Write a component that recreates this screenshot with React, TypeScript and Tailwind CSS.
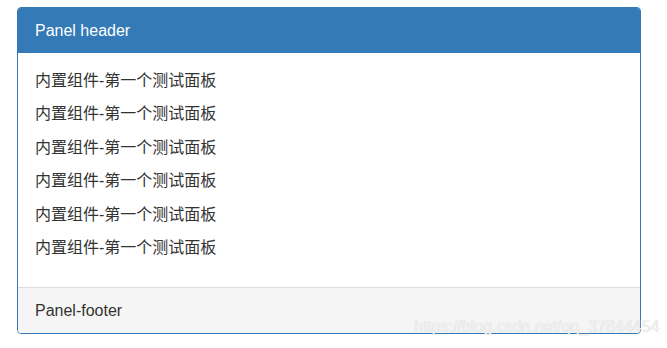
import React from "react";

const rows = Array.from({ length: 6 }, () => "内置组件-第一个测试面板");

const App: React.FC = () => {
  return (
    <div
      className="relative w-[667px] h-[348px] bg-white pt-[7px] pl-[17px]"
      style={{ fontFamily: '"Liberation Sans", "Noto Sans CJK SC", sans-serif' }}
    >
      {/* Panel */}
      <div className="w-[624px] border border-[#337ab7] rounded-[4px] overflow-hidden">
        <div className="h-[45px] bg-[#337ab7] px-[17px] flex items-center text-[16px] text-white">
          Panel header
        </div>

        <div className="px-[17px] pt-[17px] pb-[17px] text-[16px] text-[#333]">
          {rows.map((text, i) => (
            <p key={i} className="leading-[22px] mb-[11.4px]">
              {text}
            </p>
          ))}
        </div>

        <div className="h-[46px] border-t border-[#ddd] bg-[#f5f5f5] px-[17px] flex items-center text-[16px] text-[#333]">
          Panel-footer
        </div>
      </div>

      {/* Watermark */}
      <div className="absolute left-[414px] top-[317px] whitespace-nowrap text-[16px] leading-[20px] text-[#f2f2f2] [text-shadow:0_0_1px_#c8c8c8]">
        https://blog.csdn.net/qq_37844454
      </div>
    </div>
  );
};

export default App;
